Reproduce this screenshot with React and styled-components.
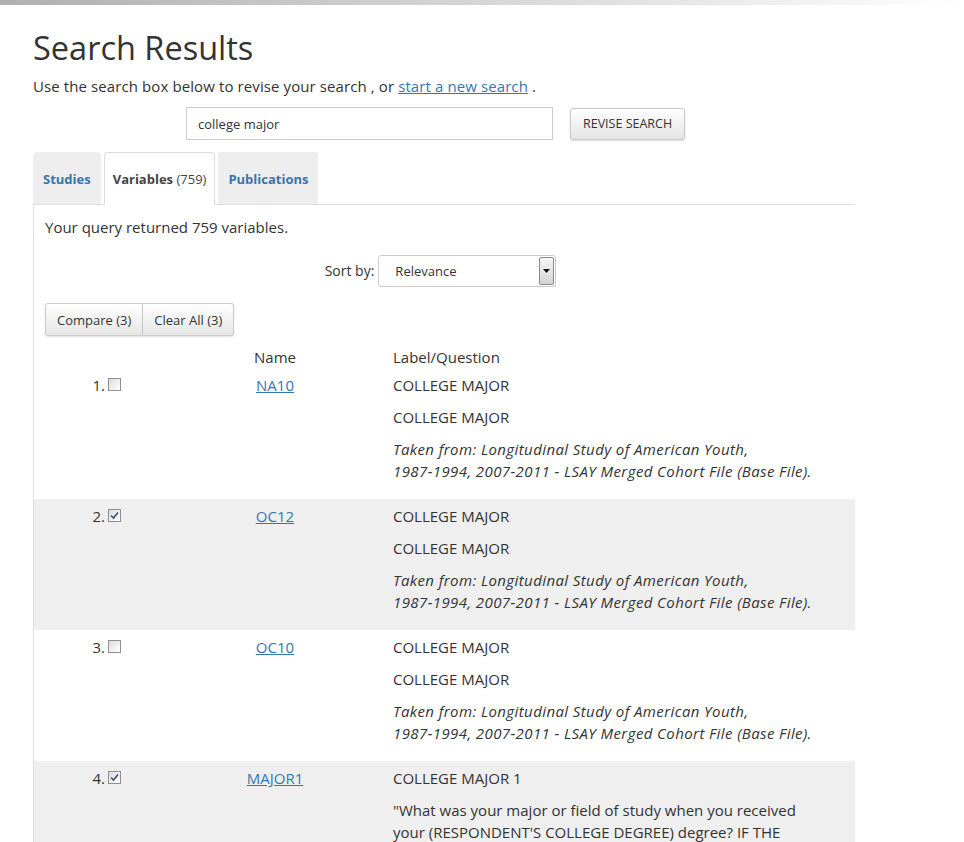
import styled, { createGlobalStyle } from "styled-components";

const GlobalStyle = createGlobalStyle`
  html, body {
    margin: 0;
    padding: 0;
    background: #ffffff;
    font-family: "Open Sans", "Noto Sans", Arial, sans-serif;
    color: #333333;
  }
`;

const results = [
  {
    id: 1,
    name: "NA10",
    checked: false,
    lines: ["COLLEGE MAJOR", "COLLEGE MAJOR"],
    source: true,
  },
  {
    id: 2,
    name: "OC12",
    checked: true,
    lines: ["COLLEGE MAJOR", "COLLEGE MAJOR"],
    source: true,
  },
  {
    id: 3,
    name: "OC10",
    checked: false,
    lines: ["COLLEGE MAJOR", "COLLEGE MAJOR"],
    source: true,
  },
  {
    id: 4,
    name: "MAJOR1",
    checked: true,
    lines: [
      "COLLEGE MAJOR 1",
      "\"What was your major or field of study when you received your (RESPONDENT'S COLLEGE DEGREE) degree? IF THE RESPONDENT HAS MORE THAN ONE MAJOR, RECORD THE FIRST MAJOR HERE.\"",
    ],
    source: false,
  },
];

const Check = ({ checked }) => (
  <CheckBox>
    {checked ? (
      <svg width="9" height="9" viewBox="0 0 9 9">
        <path
          d="M1 4.5 L3.5 7 L8 1.5"
          fill="none"
          stroke="#3a4f7a"
          strokeWidth="1.6"
        />
      </svg>
    ) : null}
  </CheckBox>
);

export default function App() {
  return (
    <>
      <GlobalStyle />
      <TopBar />
      <Page>
        <Title>Search Results</Title>
        <Intro>
          Use the search box below to revise your search , or{" "}
          <a href="#">start a new search</a> .
        </Intro>
        <SearchRow>
          <SearchInput defaultValue="college major" />
          <Button>REVISE SEARCH</Button>
        </SearchRow>
        <Tabs>
          <Tab>Studies</Tab>
          <Tab active>
            <span>
              Variables <small>(759)</small>
            </span>
          </Tab>
          <Tab>Publications</Tab>
        </Tabs>
        <Panel>
          <Summary>Your query returned 759 variables.</Summary>
          <SortRow>
            <label>Sort by:</label>
            <Select>
              <span>Relevance</span>
              <SelectArrow>
                <svg width="7" height="4" viewBox="0 0 7 4">
                  <path d="M0 0 H7 L3.5 4 Z" fill="#111" />
                </svg>
              </SelectArrow>
            </Select>
          </SortRow>
          <ButtonGroup>
            <GroupButton>Compare (3)</GroupButton>
            <GroupButton>Clear All (3)</GroupButton>
          </ButtonGroup>
          <HeaderRow>
            <div />
            <NameCell>Name</NameCell>
            <LabelCell>Label/Question</LabelCell>
          </HeaderRow>
          {results.map((r) => (
            <ResultRow key={r.id} shaded={r.id % 2 === 0}>
              <IndexCell>
                {r.id}.<Check checked={r.checked} />
              </IndexCell>
              <NameCell>
                <a href="#">{r.name}</a>
              </NameCell>
              <LabelCell>
                {r.lines.map((l, i) => (
                  <p key={i}>{l}</p>
                ))}
                {r.source ? (
                  <Source>
                    Taken from: Longitudinal Study of American Youth,{" "}
                    <Nowrap>1987-1994,</Nowrap> <Nowrap>2007-2011</Nowrap> -
                    LSAY Merged Cohort File (Base File).
                  </Source>
                ) : null}
              </LabelCell>
            </ResultRow>
          ))}
        </Panel>
      </Page>
    </>
  );
}

const TopBar = styled.div`
  height: 5px;
  background: linear-gradient(to right, #b0b0b0, #d6d6d6 50%, #ffffff);
`;

const Page = styled.div`
  padding: 0 0 0 33px;
  width: 822px;

  a {
    color: #3377b0;
    text-decoration: underline;
  }
`;

const Title = styled.h1`
  margin: 25px 0 0;
  font-size: 32.5px;
  line-height: 35px;
  font-weight: 400;
  color: #333;
`;

const Intro = styled.p`
  margin: 10px 0 0;
  font-size: 15px;
  line-height: 22px;
  letter-spacing: 0.1px;
`;

const SearchRow = styled.div`
  display: flex;
  align-items: center;
  gap: 17px;
  margin: 10px 0 0 153px;
`;

const SearchInput = styled.input`
  box-sizing: border-box;
  width: 367px;
  height: 33px;
  border: 1px solid #cccccc;
  padding: 0 11px;
  font-family: inherit;
  font-size: 13px;
  color: #333;
  outline: none;
`;

const Button = styled.button`
  box-sizing: border-box;
  height: 32px;
  padding: 0 12px;
  border: 1px solid #c8c8c8;
  border-radius: 3px;
  background: linear-gradient(#ffffff, #e4e4e4);
  box-shadow: 0 1px 2px rgba(0, 0, 0, 0.15);
  font-family: inherit;
  font-size: 12.5px;
  color: #333;
`;

const Tabs = styled.div`
  display: flex;
  gap: 3px;
  margin-top: 12px;
  height: 52px;
  align-items: stretch;
`;

const Tab = styled.div`
  box-sizing: border-box;
  display: flex;
  align-items: center;
  padding: 0 ${(p) => (p.active ? "8px" : "9px")};
  border-radius: 4px 4px 0 0;
  font-size: 13px;
  font-weight: 700;
  color: ${(p) => (p.active ? "#444" : "#3a74ad")};
  background: ${(p) => (p.active ? "#ffffff" : "#eeeeee")};
  border: 1px solid ${(p) => (p.active ? "#dddddd" : "#eeeeee")};
  border-bottom: none;
  margin-bottom: ${(p) => (p.active ? "-1px" : "0")};
  position: relative;
  z-index: 1;

  small {
    font-size: 13px;
    font-weight: 400;
  }
`;

const Panel = styled.div`
  border-top: 1px solid #dddddd;
  border-left: 1px solid #dddddd;
`;

const Summary = styled.p`
  margin: 0;
  padding: 11px 0 0 11px;
  font-size: 15px;
  line-height: 22px;
`;

const SortRow = styled.div`
  display: flex;
  justify-content: center;
  align-items: center;
  gap: 4px;
  margin-top: 17px;
  padding-right: 8px;
  font-size: 14px;

  label {
    padding-bottom: 2px;
  }
`;

const Select = styled.div`
  box-sizing: border-box;
  width: 178px;
  height: 32px;
  border: 1px solid #cccccc;
  border-radius: 3px;
  display: flex;
  align-items: center;
  justify-content: space-between;
  padding: 1px 1px 1px 16px;
  font-size: 13px;
  color: #333;
`;

const SelectArrow = styled.span`
  width: 15px;
  height: 28px;
  box-sizing: border-box;
  border: 1px solid #8a8a8a;
  border-radius: 2px;
  background: linear-gradient(#f6f6f6, #d4d4d4);
  display: flex;
  align-items: center;
  justify-content: center;
`;

const ButtonGroup = styled.div`
  display: flex;
  margin: 16px 0 0 11px;
`;

const GroupButton = styled.button`
  box-sizing: border-box;
  height: 33px;
  padding: 0 11px;
  border: 1px solid #cccccc;
  background: linear-gradient(#ffffff, #e6e6e6);
  box-shadow: 0 1px 2px rgba(0, 0, 0, 0.12);
  font-family: inherit;
  font-size: 13px;
  color: #333;

  &:first-child {
    border-radius: 3px 0 0 3px;
  }
  &:last-child {
    border-left: none;
    border-radius: 0 3px 3px 0;
  }
`;

const RowGrid = styled.div`
  display: grid;
  grid-template-columns: 88px 264px 469px;
  font-size: 15px;
  line-height: 22px;
`;

const HeaderRow = styled(RowGrid)`
  margin-top: 10px;
`;

const ResultRow = styled(RowGrid)`
  padding: 6px 0 7px;
  background: ${(p) => (p.shaded ? "#efefef" : "#ffffff")};
`;

const IndexCell = styled.div`
  text-align: right;
  display: flex;
  justify-content: flex-end;
  align-items: flex-start;
  gap: 3px;
  padding-right: 1px;
`;

const CheckBox = styled.span`
  box-sizing: border-box;
  width: 13px;
  height: 13px;
  margin-top: 4px;
  border: 1px solid #8f8f8f;
  background: linear-gradient(135deg, #dcdcdc, #ffffff);
  display: flex;
  align-items: center;
  justify-content: center;
`;

const NameCell = styled.div`
  text-align: center;
  padding-left: 42px;
`;

const LabelCell = styled.div`
  padding: 0 30px 0 7px;

  p {
    margin: 0 0 10px;
  }
`;

const Source = styled.div`
  font-style: italic;
  letter-spacing: 0.4px;
  margin-bottom: 10px;
`;

const Nowrap = styled.span`
  white-space: nowrap;
`;
